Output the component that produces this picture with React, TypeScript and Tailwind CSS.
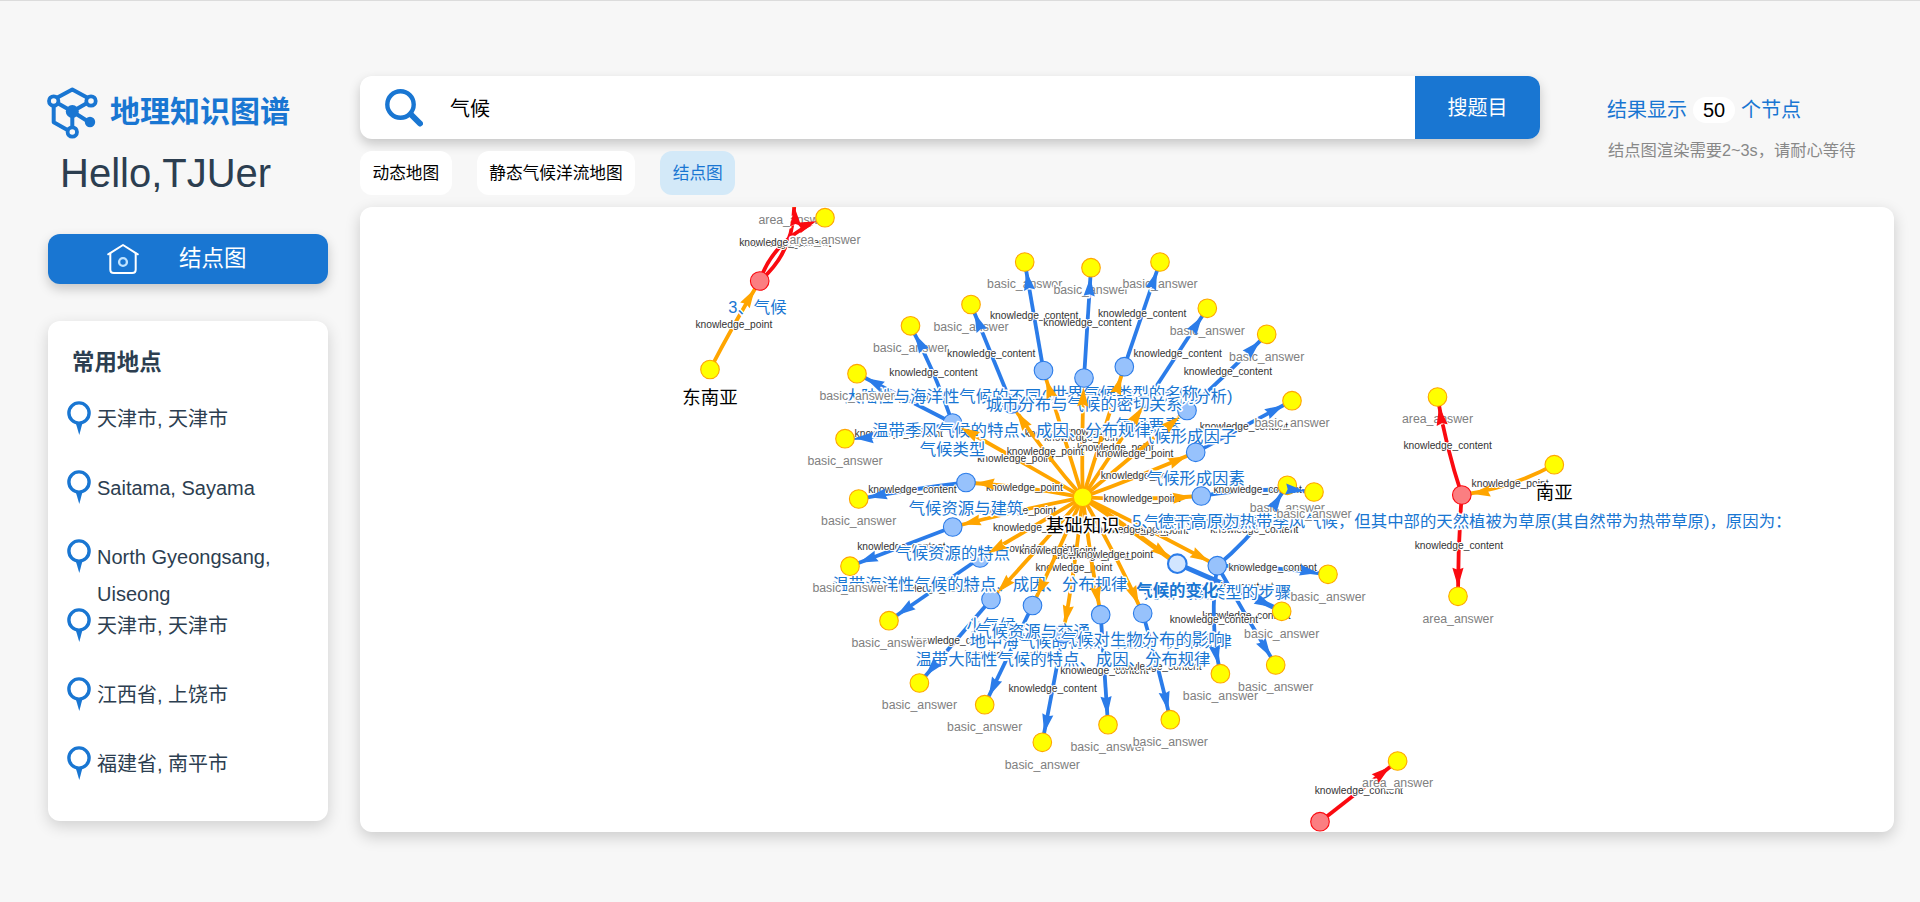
import React from "react";

type Kind = "hub" | "topic" | "area" | "answer" | "areaAnswer" | "active";

interface GraphNode {
  id: string;
  x: number;
  y: number;
  kind: Kind;
  label: string;
  labelX?: number;
}

interface GraphEdge {
  from: string;
  to: string;
  tone: "orange" | "blue" | "red";
  dx?: number;
  dy?: number;
}

const NODES: GraphNode[] = [
  { id: "b3", x: 952.5, y: 423, kind: "topic", label: "气候类型" },
  { id: "b17", x: 1148, y: 399, kind: "topic", label: "气候要素" },
  { id: "b14", x: 1187, y: 410.5, kind: "topic", label: "气候形成因子" },
  { id: "b15", x: 1195.7, y: 452.3, kind: "topic", label: "气候形成因素" },
  { id: "b16", x: 1201.3, y: 496, kind: "topic", label: "气候的影响因素" },
  { id: "b12", x: 1011.5, y: 404, kind: "topic", label: "温带季风气候的特点、成因、分布规律" },
  { id: "b1", x: 1043.5, y: 370.5, kind: "topic", label: "大陆性与海洋性气候的不同(以北半球的气候为例分析)", labelX: 1038.5 },
  { id: "b13", x: 1124.3, y: 366.7, kind: "topic", label: "世界气候类型的名称" },
  { id: "b2", x: 1084, y: 378, kind: "topic", label: "城市分布与气候的密切关系" },
  { id: "b7", x: 991, y: 599.5, kind: "topic", label: "小气候" },
  { id: "b6", x: 980, y: 558, kind: "topic", label: "温带海洋性气候的特点、成因、分布规律" },
  { id: "b5", x: 952.7, y: 527, kind: "topic", label: "气候资源的特点" },
  { id: "b4", x: 966, y: 482.5, kind: "topic", label: "气候资源与建筑" },
  { id: "b9", x: 1100.7, y: 614.7, kind: "topic", label: "地中海气候的特点、成因、分布规律" },
  { id: "b11", x: 1063, y: 633.5, kind: "topic", label: "温带大陆性气候的特点、成因、分布规律" },
  { id: "b8", x: 1032.5, y: 605.5, kind: "topic", label: "气候资源与交通" },
  { id: "b10", x: 1142.7, y: 613.3, kind: "topic", label: "气候对生物分布的影响" },
  { id: "b19", x: 1217.3, y: 565.7, kind: "topic", label: "判断气候类型的步骤" },
  { id: "hub", x: 1082.7, y: 497.3, kind: "hub", label: "基础知识" },
  { id: "sea", x: 710, y: 369.5, kind: "hub", label: "东南亚" },
  { id: "sa", x: 1554.3, y: 464.7, kind: "hub", label: "南亚" },
  { id: "r1", x: 759.7, y: 281, kind: "area", label: "3、气候", labelX: 757.5 },
  { id: "r2", x: 1461.8, y: 495, kind: "area", label: "5、德干高原为热带季风气候，但其中部的天然植被为草原(其自然带为热带草原)，原因为：" },
  { id: "r3", x: 1320, y: 821.7, kind: "area", label: "" },
  { id: "ra1", x: 794, y: 197.5, kind: "areaAnswer", label: "area_answer" },
  { id: "ra2", x: 825, y: 217.7, kind: "areaAnswer", label: "area_answer" },
  { id: "ra3", x: 1437.5, y: 397, kind: "areaAnswer", label: "area_answer" },
  { id: "ra4", x: 1458, y: 596.3, kind: "areaAnswer", label: "area_answer" },
  { id: "ra5", x: 1397.6, y: 761, kind: "areaAnswer", label: "area_answer" },
  { id: "y1", x: 1024.7, y: 262, kind: "answer", label: "basic_answer" },
  { id: "y2", x: 1091, y: 267.7, kind: "answer", label: "basic_answer" },
  { id: "y3", x: 971, y: 304.5, kind: "answer", label: "basic_answer" },
  { id: "y4", x: 910.5, y: 325.8, kind: "answer", label: "basic_answer" },
  { id: "y5", x: 857, y: 373.7, kind: "answer", label: "basic_answer" },
  { id: "y6", x: 845, y: 438.7, kind: "answer", label: "basic_answer" },
  { id: "y7", x: 858.7, y: 499, kind: "answer", label: "basic_answer" },
  { id: "y8", x: 1160, y: 262, kind: "answer", label: "basic_answer" },
  { id: "y9", x: 1207.3, y: 308.3, kind: "answer", label: "basic_answer" },
  { id: "y10", x: 1266.7, y: 334.3, kind: "answer", label: "basic_answer" },
  { id: "y11", x: 1292, y: 400.7, kind: "answer", label: "basic_answer" },
  { id: "y12", x: 1287.3, y: 485.3, kind: "answer", label: "basic_answer" },
  { id: "y13", x: 1314, y: 492, kind: "answer", label: "basic_answer" },
  { id: "y14", x: 850, y: 566.2, kind: "answer", label: "basic_answer" },
  { id: "y15", x: 889, y: 620.7, kind: "answer", label: "basic_answer" },
  { id: "y16", x: 919.4, y: 683, kind: "answer", label: "basic_answer" },
  { id: "y17", x: 984.7, y: 704.7, kind: "answer", label: "basic_answer" },
  { id: "y18", x: 1042.3, y: 742.3, kind: "answer", label: "basic_answer" },
  { id: "y19", x: 1328, y: 574.3, kind: "answer", label: "basic_answer" },
  { id: "y20", x: 1281.7, y: 611.3, kind: "answer", label: "basic_answer" },
  { id: "y21", x: 1220.4, y: 673.7, kind: "answer", label: "basic_answer" },
  { id: "y22", x: 1275.7, y: 665, kind: "answer", label: "basic_answer" },
  { id: "y23", x: 1108, y: 724.7, kind: "answer", label: "basic_answer" },
  { id: "y24", x: 1170.3, y: 719.7, kind: "answer", label: "basic_answer" },
  { id: "b18", x: 1177.3, y: 563.7, kind: "active", label: "气候的变化" },
];

const EDGES: GraphEdge[] = [
  { from: "hub", to: "b1", tone: "orange" },
  { from: "hub", to: "b2", tone: "orange", dx: -1 },
  { from: "hub", to: "b13", tone: "orange" },
  { from: "hub", to: "b17", tone: "orange" },
  { from: "hub", to: "b14", tone: "orange" },
  { from: "hub", to: "b15", tone: "orange", dy: 1 },
  { from: "hub", to: "b16", tone: "orange", dy: 2 },
  { from: "hub", to: "b3", tone: "orange", dx: -2, dy: -1.5 },
  { from: "hub", to: "b12", tone: "orange", dx: -2, dy: 1 },
  { from: "hub", to: "b4", tone: "orange", dy: -2 },
  { from: "hub", to: "b5", tone: "orange", dy: -1 },
  { from: "hub", to: "b6", tone: "orange" },
  { from: "hub", to: "b7", tone: "orange", dy: 1 },
  { from: "hub", to: "b11", tone: "orange", dx: 1, dy: 3 },
  { from: "hub", to: "b9", tone: "orange", dx: -1 },
  { from: "hub", to: "b8", tone: "orange" },
  { from: "hub", to: "b10", tone: "orange", dx: 2 },
  { from: "hub", to: "b19", tone: "orange", dy: -1 },
  { from: "hub", to: "b18", tone: "orange", dy: -1 },
  { from: "sea", to: "r1", tone: "orange", dx: -1 },
  { from: "sa", to: "r2", tone: "orange", dx: 2, dy: 4 },
  { from: "r1", to: "ra1", tone: "red", dx: 10, dy: 5 },
  { from: "r1", to: "ra2", tone: "red", dx: -9, dy: -6 },
  { from: "r2", to: "ra3", tone: "red", dx: -2 },
  { from: "r2", to: "ra4", tone: "red", dx: -1 },
  { from: "r3", to: "ra5", tone: "red" },
  { from: "b3", to: "y6", tone: "blue", dy: 3 },
  { from: "b3", to: "y5", tone: "blue" },
  { from: "b3", to: "y4", tone: "blue", dx: 2, dy: -1 },
  { from: "b12", to: "y3", tone: "blue" },
  { from: "b1", to: "y1", tone: "blue" },
  { from: "b2", to: "y2", tone: "blue" },
  { from: "b13", to: "y8", tone: "blue" },
  { from: "b17", to: "y9", tone: "blue" },
  { from: "b14", to: "y10", tone: "blue", dx: 1 },
  { from: "b15", to: "y11", tone: "blue" },
  { from: "b16", to: "y13", tone: "blue", dy: -4 },
  { from: "b4", to: "y7", tone: "blue", dy: -1 },
  { from: "b5", to: "y14", tone: "blue" },
  { from: "b6", to: "y15", tone: "blue" },
  { from: "b7", to: "y16", tone: "blue" },
  { from: "b8", to: "y17", tone: "blue" },
  { from: "b11", to: "y18", tone: "blue", dy: 1 },
  { from: "b9", to: "y23", tone: "blue", dy: 1 },
  { from: "b10", to: "y24", tone: "blue", dx: 1 },
  { from: "b19", to: "y12", tone: "blue", dx: 2, dy: 4 },
  { from: "b19", to: "y19", tone: "blue", dy: -2 },
  { from: "b19", to: "y22", tone: "blue", dy: 1 },
  { from: "b18", to: "y20", tone: "blue", dy: -1 },
  { from: "b19", to: "y21", tone: "blue", dx: -5 },
];

const TONES = { orange: "#ffa500", blue: "#2b7ce9", red: "#fa0a10" };

const NODE_STYLE: Record<Kind, { fill: string; stroke: string; size: number; color: string; offset: number }> = {
  hub: { fill: "#ffff00", stroke: "#ffa500", size: 18.45, color: "#000000", offset: 28 },
  topic: { fill: "#97c2fc", stroke: "#2b7ce9", size: 16.4, color: "#1976d2", offset: 26 },
  active: { fill: "#d2e5ff", stroke: "#2b7ce9", size: 16.4, color: "#1976d2", offset: 26 },
  area: { fill: "#fb7e81", stroke: "#fa0a10", size: 16.4, color: "#1976d2", offset: 26 },
  answer: { fill: "#ffff00", stroke: "#ffa500", size: 12.3, color: "#808080", offset: 21.8 },
  areaAnswer: { fill: "#ffff00", stroke: "#ffa500", size: 12.3, color: "#808080", offset: 21.8 },
};

const byId = new Map(NODES.map((n) => [n.id, n]));

function geometry(edge: GraphEdge) {
  const a = byId.get(edge.from)!;
  const b = byId.get(edge.to)!;
  const mx = (a.x + b.x) / 2;
  const my = (a.y + b.y) / 2;
  const dx = edge.dx ?? 0;
  const dy = edge.dy ?? 0;
  const cx = mx + dx * 2;
  const cy = my + dy * 2;
  const angle = Math.atan2(b.y - cy, b.x - cx);
  return { a, b, cx, cy, lx: mx + dx, ly: my + dy, angle };
}

function Edge({ edge }: { edge: GraphEdge }) {
  const g = geometry(edge);
  return (
    <g>
      <path
        d={`M${g.a.x} ${g.a.y}Q${g.cx} ${g.cy} ${g.b.x} ${g.b.y}`}
        fill="none"
        stroke={TONES[edge.tone]}
        strokeWidth={edge.from === "b18" || edge.to === "b18" ? 5 : 3.8}
      />
      <text
        x={g.lx}
        y={g.ly + 3}
        fontSize={10.25}
        fill="#343434"
        stroke="#ffffff"
        strokeWidth={2}
        paintOrder="stroke"
        strokeLinejoin="round"
        textAnchor="middle"
      >
        {edge.tone === "orange" ? "knowledge_point" : "knowledge_content"}
      </text>
    </g>
  );
}

function Arrow({ edge }: { edge: GraphEdge }) {
  const g = geometry(edge);
  const x = g.b.x - Math.cos(g.angle) * 9.5;
  const y = g.b.y - Math.sin(g.angle) * 9.5;
  return (
    <path
      d="M0 0L-19 5.6L-17 0L-19 -5.6Z"
      fill={TONES[edge.tone]}
      transform={`translate(${x} ${y}) rotate(${(g.angle * 180) / Math.PI})`}
    />
  );
}

function Node({ node }: { node: GraphNode }) {
  const s = NODE_STYLE[node.kind];
  const active = node.kind === "active";
  return (
    <g>
      <circle cx={node.x} cy={node.y} r={9.3} fill={s.fill} stroke={s.stroke} strokeWidth={active ? 2.1 : 1.1} />
      <text
        x={node.labelX ?? node.x}
        y={node.y + s.offset + s.size * 0.36}
        fontSize={s.size}
        fontWeight={active ? 700 : 400}
        fill={s.color}
        stroke="#ffffff"
        strokeWidth={3}
        paintOrder="stroke"
        strokeLinejoin="round"
        textAnchor="middle"
      >
        {node.label}
      </text>
    </g>
  );
}

function KnowledgeGraph() {
  return (
    <svg className="block h-full w-full" viewBox="360 207 1534 625">
      {EDGES.map((e) => (
        <Edge key={`${e.from}-${e.to}`} edge={e} />
      ))}
      {NODES.map((n) => (
        <Node key={n.id} node={n} />
      ))}
      {EDGES.map((e) => (
        <Arrow key={`${e.from}-${e.to}`} edge={e} />
      ))}
    </svg>
  );
}

function Logo() {
  return (
    <svg className="h-[52px] w-[52px] shrink-0" viewBox="0 0 52 52" fill="none" stroke="#1976d2" strokeWidth="4">
      <path d="M10.5 11L26.3 2.6L42 11" strokeLinejoin="round" />
      <path d="M10.5 15.5L26.3 24.5L42 15.5M26.3 24.5L43 35M26.3 24.5V40M7.7 18V35.3L21.5 43" strokeLinejoin="round" />
      <circle cx="7.7" cy="14" r="4.7" strokeWidth="3.8" />
      <circle cx="45" cy="14" r="4.7" strokeWidth="3.8" />
      <circle cx="26.3" cy="45" r="4.7" strokeWidth="3.8" />
      <circle cx="26.3" cy="24.5" r="6.5" fill="#1976d2" stroke="none" />
      <circle cx="44" cy="35" r="5.2" fill="#1976d2" stroke="none" />
    </svg>
  );
}

function HouseIcon() {
  return (
    <svg className="h-[32px] w-[32px]" viewBox="0 0 32 32" fill="none" stroke="#ffffff" strokeWidth="2" strokeLinecap="round" strokeLinejoin="round">
      <path d="M1.2 11.3L16 2L30.8 11.3" />
      <path d="M3.3 10.5V26.5Q3.3 30 6.8 30H25.2Q28.7 30 28.7 26.5V10.5" />
      <circle cx="16" cy="19" r="3.9" stroke="#bfe3ff" strokeWidth="2.4" />
    </svg>
  );
}

function PinIcon() {
  return (
    <svg className="h-[34px] w-[24px] shrink-0" viewBox="0 0 24 34">
      <path d="M8.6 21.5L12.3 34L15.6 21.5Z" fill="#1976d2" />
      <circle cx="12" cy="12" r="10.1" fill="#ffffff" stroke="#1976d2" strokeWidth="3.4" />
    </svg>
  );
}

function SearchIcon() {
  return (
    <svg className="h-[38px] w-[38px] shrink-0" viewBox="0 0 38 38" fill="none" stroke="#1976d2">
      <circle cx="15.5" cy="15.5" r="13.2" strokeWidth="4.4" />
      <path d="M26 25.5L35 34.5" strokeWidth="6" strokeLinecap="round" />
    </svg>
  );
}

const PLACES = ["天津市, 天津市", "Saitama, Sayama", "North Gyeongsang, Uiseong", "天津市, 天津市", "江西省, 上饶市", "福建省, 南平市"];

const TABS = [
  { name: "动态地图", selected: false },
  { name: "静态气候洋流地图", selected: false },
  { name: "结点图", selected: true },
];

export default function App() {
  return (
    <div className="flex h-[902px] w-[1920px] overflow-hidden border-t border-[#dcdcdc] bg-[#f7f7f7] font-['Liberation_Sans','Noto_Sans_CJK_SC',sans-serif] text-[#2c3e50]">
      <aside className="ml-12 flex w-[280px] shrink-0 flex-col">
        <div className="mt-[86px] -ml-[2px] flex h-[52px] items-center">
          <Logo />
          <h1 className="ml-[12px] pb-[3px] text-[30px] leading-[44px] font-bold whitespace-nowrap text-[#1976d2]">地理知识图谱</h1>
        </div>
        <p className="ml-3 h-[56px] text-[40px] leading-[68px] whitespace-nowrap">Hello,TJUer</p>
        <button className="mt-[39px] flex h-[50px] items-center rounded-[12px] bg-[#1976d2] pl-[59px] text-[22.5px] text-white shadow-[0_5px_12px_rgba(0,0,0,0.2)]">
          <HouseIcon />
          <span className="ml-[40px]">结点图</span>
        </button>
        <section className="mt-[37px] h-[500px] rounded-[12px] bg-white pl-[19px] shadow-[0_5px_15px_rgba(0,0,0,0.16)]">
          <h2 className="mt-[26px] ml-[5px] text-[22.4px] leading-[32px] font-bold">常用地点</h2>
          <ul className="mt-[19px]">
            {PLACES.map((place, i) => (
              <li key={i} className="flex h-[69px] pt-[3px]">
                <PinIcon />
                <span className="ml-[6px] w-[180px] text-[20px] leading-[37px]">{place}</span>
              </li>
            ))}
          </ul>
        </section>
      </aside>

      <main className="ml-8 flex w-[1534px] shrink-0 flex-col pt-[75px]">
        <div className="flex h-[63px]">
          <div className="flex w-[1180px] items-center overflow-hidden rounded-[12px] bg-white pl-[25px] shadow-[0_5px_12px_rgba(0,0,0,0.2)]">
            <SearchIcon />
            <span className="ml-[27px] flex-1 pt-[2px] text-[20px] text-black">气候</span>
            <button className="h-full w-[125px] bg-[#1976d2] pt-[1px] text-[20px] text-white">搜题目</button>
          </div>
          <div className="ml-[67px] flex flex-col pt-[20px]">
            <div className="flex h-[27px] items-center text-[20px] whitespace-nowrap text-[#1976d2]">
              <span>结果显示</span>
              <span className="mx-[6px] flex h-[26px] w-[42px] items-center justify-center rounded-full bg-white text-black">50</span>
              <span>个节点</span>
            </div>
            <p className="mt-[15px] ml-px text-[16.3px] leading-[24px] whitespace-nowrap text-[#888888]">结点图渲染需要2~3s，请耐心等待</p>
          </div>
        </div>

        <nav className="mt-3 flex h-11 gap-[25px] text-[16.7px]">
          {TABS.map((tab) => (
            <button
              key={tab.name}
              className={
                tab.selected
                  ? "rounded-[12px] bg-[#d3e9f8] px-[12.5px] pt-[2px] whitespace-nowrap text-[#1976d2]"
                  : "rounded-[12px] bg-white px-[12.5px] pt-[2px] whitespace-nowrap text-black"
              }
            >
              {tab.name}
            </button>
          ))}
        </nav>

        <section className="mt-3 h-[625px] overflow-hidden rounded-[12px] bg-white shadow-[0_5px_15px_rgba(0,0,0,0.18)]">
          <KnowledgeGraph />
        </section>
      </main>
    </div>
  );
}
